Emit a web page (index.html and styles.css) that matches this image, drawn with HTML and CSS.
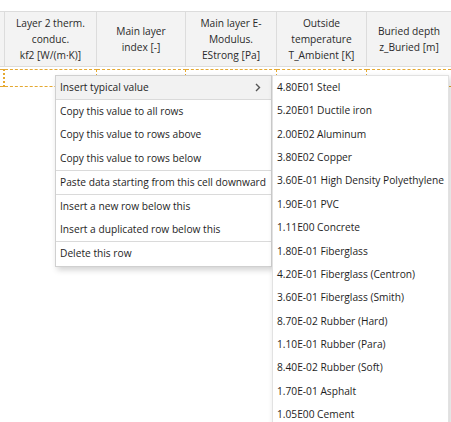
FILE: index.html
```html
<!DOCTYPE html>
<html lang="en">
<head>
    <meta charset="UTF-8">
    <title>Pipe layer table</title>
    <link rel="stylesheet" href="styles.css">
</head>
<body>

<div class="grid">
    <div class="head">
        <div class="hcell stub"></div>
        <div class="hcell">Layer 2 therm.<br>conduc.<br>kf2 [W/(m·K)]</div>
        <div class="hcell">Main layer<br>index [-]</div>
        <div class="hcell">Main layer E-<br>Modulus.<br>EStrong [Pa]</div>
        <div class="hcell">Outside<br>temperature<br>T_Ambient [K]</div>
        <div class="hcell last">Buried depth<br>z_Buried [m]</div>
    </div>
    <div class="row">
        <div class="cell stub"></div>
        <div class="cell"></div>
        <div class="cell"></div>
        <div class="cell"></div>
        <div class="cell"></div>
        <div class="cell last"></div>
    </div>
</div>

<!-- context menu -->
<div class="menu">
    <div class="item active sep">Insert typical value
        <svg class="chev" width="6" height="9" viewBox="0 0 6 9"><path d="M1 1l3.5 3.5L1 8" fill="none" stroke="#555" stroke-width="1.4"/></svg>
    </div>
    <div class="item">Copy this value to all rows</div>
    <div class="item">Copy this value to rows above</div>
    <div class="item sep">Copy this value to rows below</div>
    <div class="item sep">Paste data starting from this cell downward</div>
    <div class="item">Insert a new row below this</div>
    <div class="item sep">Insert a duplicated row below this</div>
    <div class="item">Delete this row</div>
</div>

<!-- typical values submenu -->
<div class="submenu">
    <div class="sub">4.80E01 Steel</div>
    <div class="sub">5.20E01 Ductile iron</div>
    <div class="sub">2.00E02 Aluminum</div>
    <div class="sub">3.80E02 Copper</div>
    <div class="sub">3.60E-01 High Density Polyethylene</div>
    <div class="sub">1.90E-01 PVC</div>
    <div class="sub">1.11E00 Concrete</div>
    <div class="sub">1.80E-01 Fiberglass</div>
    <div class="sub">4.20E-01 Fiberglass (Centron)</div>
    <div class="sub">3.60E-01 Fiberglass (Smith)</div>
    <div class="sub">8.70E-02 Rubber (Hard)</div>
    <div class="sub">1.10E-01 Rubber (Para)</div>
    <div class="sub">8.40E-02 Rubber (Soft)</div>
    <div class="sub">1.70E-01 Asphalt</div>
    <div class="sub">1.05E00 Cement</div>
</div>

</body>
</html>
```

FILE: styles.css
```css
html, body {
    overflow: hidden;
}

body {
    margin: 0;
    font-family: "Open Sans", "Noto Sans", sans-serif;
    font-size: 10.2px;
    color: #1e1e1e;
    background: #fff;
}

.grid {
    margin-top: 11px;
}

.head,
.row {
    display: grid;
    grid-template-columns: 5px 92px 89px 91px 90px 1fr;
}

.head {
    background: #f3f3f3;
    border-top: 1px solid #dcdcdc;
    border-bottom: 1px solid #dcdcdc;
    height: 54px;
}

.hcell {
    display: flex;
    align-items: center;
    justify-content: center;
    text-align: center;
    line-height: 16px;
    border-right: 1px solid #dcdcdc;
    color: #2a2a2a;
}

.hcell.last {
    border-right: none;
}

.row {
    margin-top: 2px;
    height: 18px;
}

.cell {
    border-top: 1px dashed #e5a830;
    border-bottom: 1px dashed #e5a830;
    border-right: 1px dashed #e5a830;
}

.cell.stub {
    border-right: 2px dotted #e5a830;
}

.cell.last {
    border-right: none;
}

/* menus */
.menu {
    position: absolute;
    left: 55px;
    top: 75px;
    width: 215px;
    background: #fff;
    border: 1px solid #d0d0d0;
    box-shadow: 2px 3px 6px rgba(0, 0, 0, 0.18);
}

.item {
    position: relative;
    height: 23.2px;
    line-height: 23.2px;
    padding-left: 4px;
    white-space: nowrap;
}

.item.sep {
    border-bottom: 1px solid #dadada;
}

.item.active {
    background: #f2f2f2;
}

.chev {
    position: absolute;
    right: 10px;
    top: 7px;
}

.submenu {
    position: absolute;
    left: 272px;
    top: 75px;
    width: 175px;
    background: #fff;
    border: 1px solid #e2e2e2;
    box-shadow: 2px 3px 6px rgba(0, 0, 0, 0.18);
}

.sub {
    height: 23.36px;
    line-height: 23.36px;
    padding-left: 4px;
    white-space: nowrap;
}
```
